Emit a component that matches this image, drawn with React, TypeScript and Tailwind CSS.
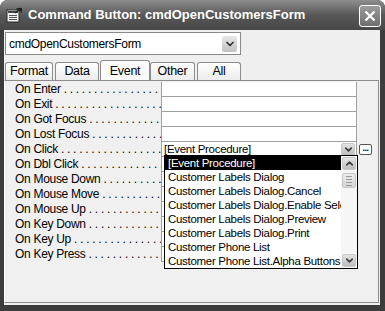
import { ChevronDown, ChevronUp } from 'lucide-react';

const events = [
  'On Enter',
  'On Exit',
  'On Got Focus',
  'On Lost Focus',
  'On Click',
  'On Dbl Click',
  'On Mouse Down',
  'On Mouse Move',
  'On Mouse Up',
  'On Key Down',
  'On Key Up',
  'On Key Press',
];

const choices = [
  '[Event Procedure]',
  'Customer Labels Dialog',
  'Customer Labels Dialog.Cancel',
  'Customer Labels Dialog.Enable Selected',
  'Customer Labels Dialog.Preview',
  'Customer Labels Dialog.Print',
  'Customer Phone List',
  'Customer Phone List.Alpha Buttons',
];

const dots = ' .'.repeat(30);

function ArrowButton({ up = false }: { up?: boolean }) {
  return (
    <div className="w-[14px] h-[13px] flex items-center justify-center rounded-[2px] bg-gradient-to-b from-[#e4e4e4] to-[#bdbdbd] border border-[#c8c8c8]">
      {up ? (
        <ChevronUp size={11} strokeWidth={3.5} className="text-[#3a3a3a]" />
      ) : (
        <ChevronDown size={11} strokeWidth={3.5} className="text-[#3a3a3a]" />
      )}
    </div>
  );
}

function Tab({ label, active = false, w }: { label: string; active?: boolean; w: string }) {
  return (
    <div
      className={`${w} flex items-center justify-center border border-b-0 border-[#8c8c8c] rounded-t-[3px] text-[12.5px] text-black ${
        active ? 'h-[21px] bg-[#fafafa] -mb-px z-10' : 'h-[18px] bg-gradient-to-b from-white to-[#ececec]'
      }`}
    >
      {label}
    </div>
  );
}

export default function App() {
  return (
    <div className="w-[385px] h-[311px] bg-[#3c3c3c] rounded-t-[8px] flex flex-col overflow-hidden font-['Liberation_Sans',Arial,sans-serif] tracking-[-0.3px]">
      {/* title bar */}
      <div className="h-[30px] flex items-center pl-[6px] pr-[4px] bg-gradient-to-b from-[#8e8e8e] via-[#585858] to-[#474747]">
        <svg width="17" height="16" viewBox="0 0 17 16">
          <rect x="1" y="3" width="12" height="12" fill="#f2f2f2" stroke="#2a2a2a" />
          <rect x="2" y="4" width="10" height="2" fill="#444" />
          <line x1="3" y1="8.5" x2="11" y2="8.5" stroke="#555" />
          <line x1="3" y1="10.5" x2="11" y2="10.5" stroke="#555" />
          <line x1="3" y1="12.5" x2="11" y2="12.5" stroke="#555" />
          <path d="M10 1 L16 1 L16 6 Z" fill="#222" />
          <path d="M9 6 L15 1" stroke="#222" strokeWidth="1.5" />
        </svg>
        <span className="ml-[5px] text-white font-bold text-[13px] tracking-[0px]">
          Command Button: cmdOpenCustomersForm
        </span>
        <div className="ml-auto mt-[2px] w-[22px] h-[22px] rounded-[3px] border border-white bg-gradient-to-b from-[#9c9c9c] to-[#6e6e6e] flex items-center justify-center">
          <svg width="12" height="12" viewBox="0 0 12 12">
            <path d="M1.5 1.5 L10.5 10.5 M10.5 1.5 L1.5 10.5" stroke="white" strokeWidth="2.2" />
          </svg>
        </div>
      </div>

      {/* body */}
      <div className="flex-1 ml-[4px] mr-[5px] mb-[6px] bg-[#efefef] flex flex-col">
        <div className="mt-[2px] ml-[1px] w-[236px] h-[23px] border border-[#8a8a8a] bg-white flex items-center pl-[3px] pr-[3px]">
          <span className="text-[12px] text-black">cmdOpenCustomersForm</span>
          <div className="ml-auto w-[15px] h-[16px] flex items-center justify-center rounded-[2px] bg-gradient-to-b from-[#e8e8e8] to-[#c2c2c2]">
            <ChevronDown size={12} strokeWidth={3.5} className="text-[#333]" />
          </div>
        </div>

        <div className="mt-[5px] flex items-end gap-[2px] pl-px">
          <Tab label="Format" w="w-[48px]" />
          <Tab label="Data" w="w-[44px]" />
          <div className="-ml-[1px]">
            <Tab label="Event" active w="w-[50px]" />
          </div>
          <div className="-ml-[2px]">
            <Tab label="Other" w="w-[45px]" />
          </div>
          <Tab label="All" w="w-[44px]" />
        </div>

        <div className="relative flex-1 mb-[2px] mr-px border border-[#8c8c8c] border-l-white bg-[#f0f0f0] pt-px">
          {events.map((ev, i) => (
            <div key={ev} className="flex h-[15px]">
              <div className="w-[156px] pl-[10px] flex text-[12px] text-black leading-[15px] whitespace-pre overflow-hidden">
                <span>{ev}</span>
                <span className="flex-1 min-w-0 overflow-hidden">{dots}</span>
              </div>
              <div className="w-[196px] bg-white border-l border-r border-b border-[#a0a0a0] flex items-center">
                {i === 4 && (
                  <>
                    <span className="pl-[2px] text-[11.5px] text-black leading-[14px]">[Event Procedure]</span>
                    <div className="ml-auto mr-px">
                      <ArrowButton />
                    </div>
                  </>
                )}
              </div>
              {i === 4 && (
                <div className="ml-[2px] mt-[2px] w-[13px] h-[11px] border border-[#555] rounded-[2px] bg-white flex items-center justify-center">
                  <span className="text-[9px] font-bold leading-[6px] tracking-[-0.5px] -mt-[3px]">...</span>
                </div>
              )}
            </div>
          ))}

          {/* open dropdown list */}
          <div className="absolute left-[159px] top-[74px] w-[194px] h-[114px] bg-white border border-black flex">
            <div className="flex-1 min-w-0 flex flex-col">
              {choices.map((c, i) => (
                <div
                  key={c}
                  className={`h-[14px] pl-[3px] text-[11.5px] leading-[14px] whitespace-nowrap overflow-hidden ${
                    i === 0 ? 'bg-black text-white' : 'text-black'
                  }`}
                >
                  {c}
                </div>
              ))}
            </div>
            <div className="w-[16px] shrink-0 bg-[#f6f6f6] flex flex-col items-center pt-[1px] pb-[1px]">
              <ArrowButton up />
              <div className="mt-[3px] w-[14px] h-[15px] rounded-[2px] border border-[#c6c6c6] bg-gradient-to-b from-[#ececec] to-[#d6d6d6] flex flex-col items-center justify-center gap-[2px]">
                <div className="w-[6px] h-px bg-[#9a9a9a]" />
                <div className="w-[6px] h-px bg-[#9a9a9a]" />
                <div className="w-[6px] h-px bg-[#9a9a9a]" />
                <div className="w-[6px] h-px bg-[#9a9a9a]" />
              </div>
              <div className="mt-auto">
                <ArrowButton />
              </div>
            </div>
          </div>
        </div>
      </div>
    </div>
  );
}
